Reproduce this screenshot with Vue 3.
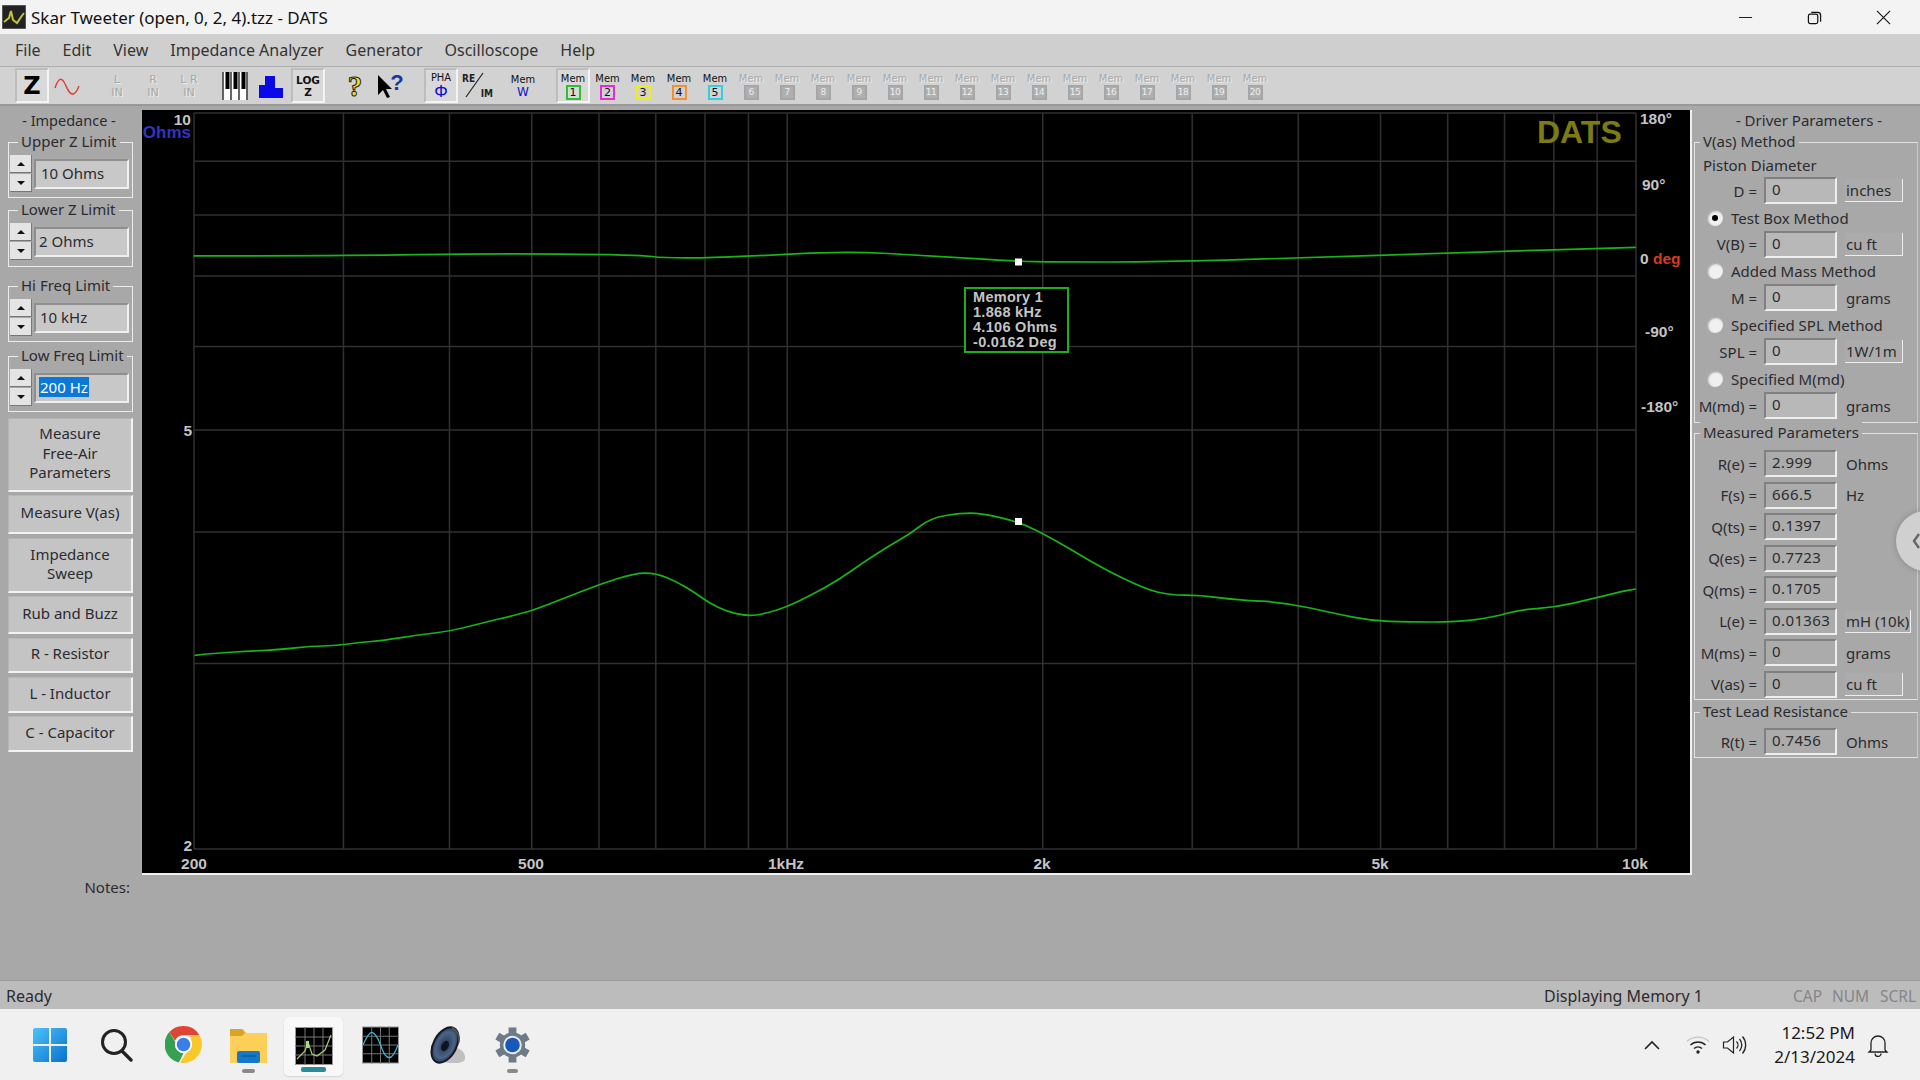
<script setup>
const menus = ['File', 'Edit', 'View', 'Impedance Analyzer', 'Generator', 'Oscilloscope', 'Help']

const memColors = ['#2fc02f', '#e030d0', '#eeee10', '#f09030', '#30d0e0']
const tools = [
  { k: 'z', w: 34, m: 0, on: true },
  { k: 'sine', w: 34, m: 1 },
  { k: 'in', t: 'L', w: 36, m: 15 },
  { k: 'in', t: 'R', w: 36, m: 0 },
  { k: 'in', t: 'L R', w: 36, m: 0 },
  { k: 'piano', w: 36, m: 10 },
  { k: 'hist', w: 36, m: 0 },
  { k: 'log', w: 34, m: 2, on: true },
  { k: 'help', w: 34, m: 13 },
  { k: 'arrow', w: 34, m: 1 },
  { k: 'pha', w: 34, m: 17, on: true },
  { k: 'reim', w: 34, m: 1 },
  { k: 'memw', w: 34, m: 13 },
  { k: 'mem', n: 1, w: 34, m: 16, on: true },
  ...Array.from({ length: 19 }, (_, i) => ({ k: 'mem', n: i + 2, w: i === 0 ? 35 : 36, m: 0 }))
]

const limits = [
  { title: 'Upper Z Limit', val: '10 Ohms', mt: 0, h: 56, pad: 5 },
  { title: 'Lower Z Limit', val: '2 Ohms', mt: 12, h: 57, pad: 3 },
  { title: 'Hi Freq Limit', val: '10 kHz', mt: 19, h: 56, pad: 4 },
  { title: 'Low Freq Limit', val: '200 Hz', mt: 14, h: 56, pad: 3, sel: true }
]
const buttons = [
  { lines: ['Measure', 'Free-Air', 'Parameters'], mt: 6, h: 74 },
  { lines: ['Measure V(as)'], mt: 3, h: 39 },
  { lines: ['Impedance', 'Sweep'], mt: 4, h: 55 },
  { lines: ['Rub and Buzz'], mt: 3, h: 38 },
  { lines: ['R - Resistor'], mt: 4, h: 35 },
  { lines: ['L - Inductor'], mt: 4, h: 36 },
  { lines: ['C - Capacitor'], mt: 3, h: 36 }
]

const vasRows = [
  { type: 'text', label: 'Piston Diameter', h: 23 },
  { type: 'in', label: 'D =', val: '0', unit: 'inches', box: true, h: 29 },
  { type: 'radio', label: 'Test Box Method', on: true, h: 26 },
  { type: 'in', label: 'V(B) =', val: '0', unit: 'cu ft', box: true, h: 26 },
  { type: 'radio', label: 'Added Mass Method', h: 27 },
  { type: 'in', label: 'M =', val: '0', unit: 'grams', h: 27 },
  { type: 'radio', label: 'Specified SPL Method', h: 27 },
  { type: 'in', label: 'SPL =', val: '0', unit: '1W/1m', box: true, h: 27 },
  { type: 'radio', label: 'Specified M(md)', h: 27 },
  { type: 'in', label: 'M(md) =', val: '0', unit: 'grams', h: 27 }
]
const measured = [
  { label: 'R(e) =', val: '2.999', unit: 'Ohms' },
  { label: 'F(s) =', val: '666.5', unit: 'Hz' },
  { label: 'Q(ts) =', val: '0.1397' },
  { label: 'Q(es) =', val: '0.7723' },
  { label: 'Q(ms) =', val: '0.1705' },
  { label: 'L(e) =', val: '0.01363', unit: 'mH (10k)', box: true, wide: true },
  { label: 'M(ms) =', val: '0', unit: 'grams' },
  { label: 'V(as) =', val: '0', unit: 'cu ft', box: true }
]

// chart scales in page pixels
const X0 = 194, XW = 1442, Y0 = 113, YH = 736
const fx = f => X0 + (Math.log10(f / 200) / Math.log10(50)) * XW
const fy = z => Y0 + ((1 - Math.log10(z)) / Math.log10(5)) * YH
const freqs = [200, 300, 400, 500, 600, 700, 800, 900, 1000, 2000, 3000, 4000, 5000, 6000, 7000, 8000, 9000, 10000]
const vLines = freqs.map(fx)
const hLines = [10, 9, 8, 7, 6, 5, 4, 3, 2].map(fy)

// smooth curve through the sampled points: quadratic segments between midpoints
const smooth = pts => {
  let d = `M${pts[0][0].toFixed(1)} ${pts[0][1].toFixed(1)}`
  for (let i = 1; i < pts.length - 1; i++) {
    const mx = (pts[i][0] + pts[i + 1][0]) / 2
    const my = (pts[i][1] + pts[i + 1][1]) / 2
    d += ` Q${pts[i][0].toFixed(1)} ${pts[i][1].toFixed(1)} ${mx.toFixed(1)} ${my.toFixed(1)}`
  }
  const l = pts[pts.length - 1]
  return d + ` L${l[0].toFixed(1)} ${l[1].toFixed(1)}`
}

const S = 1920 / 1568
const zoomPts = [[10,496],[65,488],[130,484],[200,478],[260,469],[320,467],[370,457],[420,452],[500,434],[565,424],[640,398],[700,378],[745,362],[820,322],[890,284],[970,249],[1015,250],[1060,275],[1100,308],[1130,338],[1170,365],[1215,378],[1250,372],[1300,351],[1350,317],[1410,272],[1470,214],[1520,170],[1568,132]]
const dispPts = [[760,423],[785,419],[800,419],[832,426],[860,440],[900,464],[935,481],[955,486],[980,486],[1010,490],[1050,492],[1090,501],[1120,507],[1150,508],[1190,508],[1220,504],[1240,498],[1270,496],[1300,489],[1325,483],[1336,481]]
const impedance = smooth([
  ...zoomPts.map(([x, y]) => [190 + x / 2.178, 490 + y / 3]),
  ...dispPts.map(([x, y]) => [x * S, y * S])
])
const phase = smooth([[158,209],[280,209],[400,207],[520,208],[545,211],[600,210],[690,205],[760,209],[832,213.5],[860,214],[950,214],[1050,211],[1200,206],[1336,202]]
  .map(([x, y]) => [x * S, y * S]))

const xLabels = [['200', 194], ['500', 531], ['1kHz', 786], ['2k', 1042], ['5k', 1380], ['10k', 1635]]
const tipLines = ['Memory 1', '1.868 kHz', '4.106 Ohms', '-0.0162 Deg']
</script>

<template>
  <div class="app">
    <header class="title">
      <svg class="appicon" viewBox="0 0 24 24">
        <rect width="24" height="24" fill="#222" stroke="#888" />
        <path d="M2 17 L7 13 L9 6 L11 15 L15 18 L19 12 L22 8" fill="none" stroke="#c4c43a" stroke-width="2" />
      </svg>
      <span class="title-text">Skar Tweeter (open, 0, 2, 4).tzz - DATS</span>
      <div class="winbtns">
        <svg viewBox="0 0 16 16"><path d="M1 8h14" stroke="#111" fill="none" /></svg>
        <svg viewBox="0 0 16 16"><rect x="1.5" y="4.5" width="10" height="10" rx="2" fill="none" stroke="#111" stroke-width="1.3" /><path d="M4.5 2.5h7a3 3 0 0 1 3 3v7" fill="none" stroke="#111" stroke-width="1.3" /></svg>
        <svg viewBox="0 0 16 16"><path d="M1 1l14 14M15 1L1 15" stroke="#111" stroke-width="1.2" fill="none" /></svg>
      </div>
    </header>

    <nav class="menu">
      <span v-for="m in menus" :key="m" class="menu-item">{{ m }}</span>
    </nav>

    <div class="toolbar">
      <div v-for="(t, i) in tools" :key="i" class="tool" :class="{ on: t.on }" :style="{ width: t.w + 'px', marginLeft: t.m + 'px' }">
        <span v-if="t.k === 'z'" class="t-z">Z</span>
        <svg v-else-if="t.k === 'sine'" width="26" height="20" viewBox="0 0 26 20"><path d="M1 12 C4 3 7 1 10 6 S15 19 19 18 S24 12 25 10" fill="none" stroke="#e03a30" stroke-width="1.4" /></svg>
        <div v-else-if="t.k === 'in'" class="t-in"><span>{{ t.t }}</span><span>IN</span></div>
        <svg v-else-if="t.k === 'piano'" width="26" height="30" viewBox="0 0 26 30">
          <rect x="0.5" y="1" width="25" height="28" fill="#fff" />
          <path d="M1 1v28M9 1v28M17 1v28M25 1v28" stroke="#000" stroke-width="1.2" />
          <path d="M3.5 1h4v17h-4zM11.5 1h4v17h-4zM19.5 1h4v17h-4z" fill="#000" />
        </svg>
        <svg v-else-if="t.k === 'hist'" width="26" height="26" viewBox="0 0 26 26"><path d="M1 25V12h6V3h10v12h8v10z" fill="#0808e8" /></svg>
        <div v-else-if="t.k === 'log'" class="t-log"><span>LOG</span><span>Z</span></div>
        <span v-else-if="t.k === 'help'" class="t-help">?</span>
        <div v-else-if="t.k === 'arrow'" class="t-arrow">
          <svg width="16" height="26" viewBox="0 0 16 26"><path d="M2 2v20l5-5 4 8 3-1-4-8h6z" fill="#000" /></svg>
          <span>?</span>
        </div>
        <div v-else-if="t.k === 'pha'" class="t-stack"><span class="sm">PHA</span><span class="phi">Φ</span></div>
        <div v-else-if="t.k === 'reim'" class="t-reim">
          <span class="re">RE</span>
          <svg class="slash" width="28" height="28" viewBox="0 0 28 28"><path d="M21 1L4 25" stroke="#222" stroke-width="1.2" /></svg>
          <span class="im">IM</span>
        </div>
        <div v-else-if="t.k === 'memw'" class="t-stack"><span class="sm">Mem</span><span class="w">W</span></div>
        <div v-else class="t-mem" :class="{ off: t.n > 5 }">
          <span class="sm">Mem</span>
          <span class="num" :style="t.n <= 5 ? { borderColor: memColors[t.n - 1] } : null">{{ t.n }}</span>
        </div>
      </div>
    </div>

    <main class="body">
      <aside class="left">
        <div class="left-title">- Impedance -</div>
        <section v-for="g in limits" :key="g.title" class="limit" :style="{ marginTop: g.mt + 'px', height: g.h + 'px' }">
          <span class="legend">{{ g.title }}</span>
          <div class="spin">
            <span class="spin-btn"><i class="up"></i></span>
            <span class="spin-btn"><i class="down"></i></span>
          </div>
          <div class="limit-field" :style="{ paddingLeft: g.pad + 'px' }">
            <span :class="{ selected: g.sel }">{{ g.val }}</span>
          </div>
        </section>
        <button v-for="b in buttons" :key="b.lines[0]" class="cmd" :style="{ marginTop: b.mt + 'px', height: b.h + 'px' }">
          <span v-for="l in b.lines" :key="l">{{ l }}</span>
        </button>
        <div class="notes">Notes:</div>
      </aside>

      <div class="center">
        <div class="chart">
          <svg class="plot" viewBox="142 110 1546 761" width="1546" height="761">
            <g stroke="#303030" stroke-width="1.5">
              <line v-for="x in vLines" :key="'v' + x" :x1="x" :x2="x" :y1="Y0" :y2="Y0 + YH" />
              <line v-for="y in hLines" :key="'h' + y" :x1="X0" :x2="X0 + XW" :y1="y" :y2="y" />
            </g>
            <path :d="phase" fill="none" stroke="#18b418" stroke-width="1.7" />
            <path :d="impedance" fill="none" stroke="#18b418" stroke-width="1.7" />
            <rect x="1015" y="258.5" width="7" height="7" fill="#fff" />
            <rect x="1015" y="518" width="7" height="7" fill="#fff" />

            <text class="ax" x="191" y="125" text-anchor="end">10</text>
            <text class="ohms" x="191" y="138" text-anchor="end">Ohms</text>
            <text class="ax" x="192" y="436" text-anchor="end">5</text>
            <text class="ax" x="192" y="851" text-anchor="end">2</text>
            <text v-for="l in xLabels" :key="l[0]" class="ax" :x="l[1]" y="869" text-anchor="middle">{{ l[0] }}</text>
            <text class="ax" x="1640" y="124">180°</text>
            <text class="ax" x="1642" y="190">90°</text>
            <text class="ax" x="1640" y="264">0 <tspan class="deg">deg</tspan></text>
            <text class="ax" x="1645" y="337">-90°</text>
            <text class="ax" x="1641" y="412">-180°</text>
            <text class="dats" x="1537" y="143">DATS</text>

            <rect x="965" y="288" width="103" height="64" fill="#000" stroke="#1cae1c" stroke-width="2" />
            <text v-for="(l, i) in tipLines" :key="l" class="tip" x="973" :y="302 + i * 15">{{ l }}</text>
          </svg>
        </div>
      </div>

      <aside class="right">
        <div class="right-title">- Driver Parameters -</div>
        <section class="rgroup vas">
          <span class="legend">V(as) Method</span>
          <div v-for="r in vasRows" :key="r.label" class="row" :style="{ height: r.h + 'px' }">
            <span v-if="r.type === 'text'" class="plain">{{ r.label }}</span>
            <template v-else-if="r.type === 'radio'">
              <span class="radio" :class="{ on: r.on }"></span>
              <span class="radio-label">{{ r.label }}</span>
            </template>
            <template v-else>
              <span class="lab">{{ r.label }}</span>
              <span class="field vasf">{{ r.val }}</span>
              <span class="unit" :class="{ box: r.box }">{{ r.unit }}</span>
            </template>
          </div>
        </section>
        <section class="rgroup meas">
          <span class="legend">Measured Parameters</span>
          <div v-for="r in measured" :key="r.label" class="row mrow">
            <span class="lab">{{ r.label }}</span>
            <span class="field">{{ r.val }}</span>
            <span v-if="r.unit" class="unit" :class="{ box: r.box, wide: r.wide }">{{ r.unit }}</span>
          </div>
        </section>
        <section class="rgroup lead">
          <span class="legend">Test Lead Resistance</span>
          <div class="row">
            <span class="lab">R(t) =</span>
            <span class="field">0.7456</span>
            <span class="unit">Ohms</span>
          </div>
        </section>
        <div class="swipe"><svg width="8" height="20" viewBox="0 0 8 20"><path d="M7 3L2 10l5 7" fill="none" stroke="#666" stroke-width="2.4" /></svg></div>
      </aside>
    </main>

    <footer class="status">
      <span class="ready">Ready</span>
      <span class="disp">Displaying Memory 1</span>
      <span class="ind cap">CAP</span>
      <span class="ind nm">NUM</span>
      <span class="ind scrl">SCRL</span>
    </footer>

    <div class="taskbar">
      <div class="tb-icons">
        <div class="tb win">
          <svg width="36" height="36" viewBox="0 0 36 36">
            <defs><linearGradient id="wg" x1="0" y1="0" x2="1" y2="1"><stop offset="0" stop-color="#4cc2f8" /><stop offset="1" stop-color="#0a70cf" /></linearGradient></defs>
            <path d="M1 3a2 2 0 0 1 2-2h14v16H1zM19 1h14a2 2 0 0 1 2 2v14H19zM1 19h16v16H3a2 2 0 0 1-2-2zM19 19h16v14a2 2 0 0 1-2 2H19z" fill="url(#wg)" />
          </svg>
        </div>
        <div class="tb search">
          <svg width="34" height="36" viewBox="0 0 34 36"><circle cx="15" cy="15" r="11.5" fill="none" stroke="#222" stroke-width="3" /><path d="M23 24l9 9" stroke="#222" stroke-width="3.4" stroke-linecap="round" /></svg>
        </div>
        <div class="tb chrome">
          <svg width="37" height="37" viewBox="0 0 36 36">
            <path d="M18 0a18 18 0 0 1 15.6 9H18a9 9 0 0 0-8.2 5.3L4.3 5.9A18 18 0 0 1 18 0z" fill="#e04434" />
            <path d="M4.3 5.9l8 13.6a6 6 0 0 0 5.7 7l-4.6 9A18 18 0 0 1 4.3 5.9z" fill="#34a050" />
            <path d="M33.6 9A18 18 0 0 1 15 35.7l8-13.7a9 9 0 0 0 .5-13z" fill="#f8c82a" />
            <circle cx="18" cy="18" r="8.4" fill="#fff" /><circle cx="18" cy="18" r="6.6" fill="#3a7ee8" />
          </svg>
        </div>
        <div class="tb folder">
          <svg width="37" height="37" viewBox="0 0 37 37">
            <path d="M0 3h13l4 4H37v30H0z" fill="#fcd058" /><path d="M0 3h12l3 4-3 3H0z" fill="#d8a428" />
            <rect x="7" y="25" width="23" height="12" rx="2" fill="#1678c8" /><path d="M11 30h15" stroke="#0a4c90" />
          </svg>
        </div>
        <div class="tb active">
          <svg width="38" height="38" viewBox="0 0 38 38">
            <rect x=".5" y=".5" width="37" height="37" fill="#000" stroke="#999" />
            <path d="M10 0v38M19 0v38M28 0v38M0 10h38M0 19h38M0 28h38" stroke="#777" />
            <path d="M2 32L10 24l3-9 4 12 5 2 8-6 6-15" fill="none" stroke="#a8d070" stroke-width="1.2" />
            <rect x="11" y="14" width="3" height="7" fill="#a8e078" />
          </svg>
        </div>
        <div class="tb scope">
          <svg width="38" height="38" viewBox="0 0 38 38">
            <rect x=".5" y=".5" width="37" height="37" fill="#000" stroke="#999" />
            <path d="M10 0v38M19 0v38M28 0v38M0 10h38M0 19h38M0 28h38" stroke="#777" />
            <path d="M1 19C5 10 8 6 10 6s6 4 9 13 6 13 9 13 6-5 9-13" fill="none" stroke="#40b8d0" stroke-width="1.3" />
          </svg>
        </div>
        <div class="tb speaker">
          <svg width="36" height="38" viewBox="0 0 36 38">
            <defs><radialGradient id="sg" cx=".5" cy=".5" r=".6"><stop offset="0" stop-color="#26364e" /><stop offset=".6" stop-color="#4a6488" /><stop offset="1" stop-color="#1c2028" /></radialGradient></defs>
            <path d="M24 22c4-1 10 3 11 8s-3 7-9 7-12 0-13-2c6-3 10-8 11-13z" fill="#c0c0c0" />
            <ellipse cx="15" cy="19" rx="11.5" ry="19" transform="rotate(28 15 19)" fill="url(#sg)" />
            <ellipse cx="15" cy="19" rx="11.5" ry="19" transform="rotate(28 15 19)" fill="none" stroke="#15181e" stroke-width="2" />
            <ellipse cx="15" cy="20" rx="3.5" ry="5.5" transform="rotate(28 15 20)" fill="#10141c" />
            <path d="M22 1.5c5 3 8 8 7 15" fill="none" stroke="#555" stroke-width="1.5" />
          </svg>
        </div>
        <div class="tb gear">
          <svg width="38" height="38" viewBox="0 0 38 38">
            <circle cx="19" cy="19" r="13" fill="#6e7a86" />
            <g stroke="#6e7a86" stroke-width="8"><path d="M19 1v36" /><path d="M3.4 10l31.2 18" /><path d="M3.4 28l31.2-18" /></g>
            <circle cx="19" cy="19" r="9.5" fill="#e8edf2" /><circle cx="19" cy="19" r="7.5" fill="#1858b8" />
          </svg>
        </div>
        <span class="pill p1"></span>
        <span class="pill p2"></span>
        <span class="pill p3"></span>
      </div>
      <div class="tray">
        <svg class="chev" width="18" height="10" viewBox="0 0 18 10"><path d="M2 9l7-7 7 7" fill="none" stroke="#222" stroke-width="1.6" /></svg>
        <svg class="wifi" width="24" height="20" viewBox="0 0 24 20">
          <path d="M1 6.5a16 16 0 0 1 22 0" fill="none" stroke="#c4c4c4" stroke-width="1.3" />
          <path d="M4.5 10a11 11 0 0 1 15 0M8 13.5a6 6 0 0 1 8 0" fill="none" stroke="#222" stroke-width="1.4" />
          <circle cx="12" cy="17" r="1.7" fill="#222" />
        </svg>
        <svg class="vol" width="26" height="20" viewBox="0 0 26 20">
          <path d="M1.5 7h4l6-5v16l-6-5h-4z" fill="none" stroke="#222" stroke-width="1.2" />
          <path d="M14.5 6.5a5 5 0 0 1 0 7M17.5 4a9 9 0 0 1 0 12M20.5 1.5a13 13 0 0 1 0 17" fill="none" stroke="#222" stroke-width="1.3" />
        </svg>
        <div class="clock"><span>12:52 PM</span><span>2/13/2024</span></div>
        <svg class="bell" width="22" height="24" viewBox="0 0 22 24"><path d="M4 17V10a7 7 0 0 1 14 0v7l2 2H2zM8 20.5a3 3 0 0 0 6 0" fill="none" stroke="#222" stroke-width="1.3" /></svg>
      </div>
    </div>
  </div>
</template>

<style scoped>
.app { width: 1920px; height: 1080px; display: flex; flex-direction: column; overflow: hidden; font-family: "Noto Sans", "Liberation Sans", sans-serif; color: #2b2b30; background: #a8a8a8; }

.title { height: 34px; flex: none; background: #f3f3f3; display: flex; align-items: center; position: relative; }
.appicon { width: 24px; height: 24px; margin-left: 2px; }
.title-text { margin-left: 5px; font-size: 17px; color: #111; white-space: nowrap; }
.winbtns { margin-left: auto; display: flex; gap: 54px; padding-right: 29px; align-items: center; }
.winbtns svg { width: 15px; height: 15px; }

.menu { height: 33px; flex: none; background: #cfcfcf; display: flex; align-items: center; padding-left: 4px; border-bottom: 1px solid #aeaeae; box-sizing: border-box; }
.menu-item { padding: 0 11px; font-size: 16px; color: #333; white-space: nowrap; }

.toolbar { height: 39px; flex: none; background: #d2d2d2; display: flex; align-items: center; padding-left: 15px; border-bottom: 2px solid #999; box-sizing: border-box; }
.tool { height: 35px; flex: none; box-sizing: border-box; display: flex; align-items: center; justify-content: center; border: 2px solid transparent; }
.tool.on { background: #d9d9d9; border-color: #bdbdbd #f4f4f4 #f4f4f4 #bdbdbd; }
.t-z { font: 900 24px "DejaVu Sans", sans-serif; color: #000; }
.t-in { display: flex; flex-direction: column; align-items: center; font: 11px/13px "DejaVu Sans", sans-serif; color: #a6a6a6; text-shadow: 1px 1px #efefef; }
.t-log { display: flex; flex-direction: column; align-items: center; font: bold 10.5px/12px "DejaVu Sans", sans-serif; color: #111; }
.t-help { font: bold 29px/30px "Liberation Serif", serif; color: #f4d820; -webkit-text-stroke: 1px #222; }
.t-arrow { display: flex; align-items: flex-start; }
.t-arrow span { font: bold 22px/20px "Liberation Sans", sans-serif; color: #1838a0; margin-left: -2px; }
.t-stack { display: flex; flex-direction: column; align-items: center; line-height: 13px; }
.sm { font: 11px/13px "DejaVu Sans Condensed", "DejaVu Sans", sans-serif; color: #111; white-space: nowrap; }
.phi { font: 17px/16px "Liberation Sans", sans-serif; color: #1010d0; }
.w { font: 12px/13px "DejaVu Sans", sans-serif; color: #1010d0; }
.t-reim { width: 28px; height: 28px; position: relative; font: bold 10px/11px "DejaVu Sans Condensed", "DejaVu Sans", sans-serif; color: #222; }
.t-reim .re { position: absolute; left: 0; top: 1px; }
.t-reim .im { position: absolute; right: -3px; bottom: 1px; }
.t-reim .slash { position: absolute; left: 0; top: 0; }
.t-mem { display: flex; flex-direction: column; align-items: center; }
.num { width: 15px; height: 15px; box-sizing: border-box; border: 2px solid #aaa; font: 11px/11px "DejaVu Sans", sans-serif; text-align: center; color: #111; white-space: nowrap; }
.t-mem.off .sm { color: #a8a8a8; text-shadow: 1px 1px #efefef; }
.t-mem.off .num { background: #b0b0b0; color: #eee; border-color: #a6a6a6; font-size: 9px; letter-spacing: -.5px; }

.body { flex: 1; min-height: 0; display: flex; background: #a8a8a8; }

.left { width: 142px; flex: none; box-sizing: border-box; padding-left: 8px; display: flex; flex-direction: column; align-items: flex-start; font-size: 15px; }
.left-title { width: 125px; height: 36px; padding: 4px 3px 0 0; box-sizing: border-box; text-align: center; line-height: 20px; font-size: 14.5px; }
.limit { width: 125px; box-sizing: border-box; position: relative; display: flex; border: 1px solid #ececec; padding: 12px 0 0 1px; flex: none; }
.legend { position: absolute; top: -12px; left: 9px; background: #a8a8a8; padding: 0 3px; font-size: 15px; line-height: 20px; white-space: nowrap; }
.spin { width: 22px; display: flex; flex-direction: column; gap: 1px; flex: none; }
.spin-btn { height: 18px; background: #e4e4e4; border-right: 1px solid #777; border-bottom: 1px solid #777; display: flex; align-items: center; justify-content: center; box-sizing: border-box; }
.spin-btn i { width: 0; height: 0; border-left: 4px solid transparent; border-right: 4px solid transparent; }
.spin-btn .up { border-bottom: 4px solid #111; }
.spin-btn .down { border-top: 4px solid #111; }
.limit-field { width: 95px; height: 30px; margin: 4px 0 0 2px; box-sizing: border-box; background: #c8c8c8; border: 2px solid; border-color: #8e8e8e #efefef #efefef #8e8e8e; display: flex; align-items: center; font-size: 15px; padding-bottom: 2px; }
.selected { background: #0a78d7; color: #fff; padding: 0 1px; }
.cmd { width: 125px; flex: none; padding: 0 0 2px; box-sizing: border-box; background: #c4c4c4; border: 1px solid #b6b6b6; border-right: 2px solid #f2f2f2; border-bottom: 2px solid #f2f2f2; display: flex; flex-direction: column; align-items: center; justify-content: center; font: 15px/19.5px "Noto Sans", sans-serif; color: #2b2b30; }
.notes { width: 122px; margin-top: 125px; text-align: right; font-size: 15px; line-height: 20px; }

.center { width: 1550px; flex: none; padding-top: 4px; box-sizing: border-box; }
.chart { width: 1550px; height: 765px; box-sizing: border-box; background: #000; border-bottom: 2px solid #f0f0f0; border-right: 2px solid #f0f0f0; }
.plot { display: block; }
.ax { font: bold 15.5px "Liberation Sans", sans-serif; fill: #c4c4c4; }
.ohms { font: bold 17px "Liberation Sans", sans-serif; fill: #3434c0; }
.deg { fill: #d83a22; }
.dats { font: bold 32px "Liberation Sans", sans-serif; fill: #7c7c10; }
.tip { font: bold 14.5px "Liberation Sans", sans-serif; fill: #c4c4c4; letter-spacing: .3px; }

.right { width: 228px; flex: none; position: relative; box-sizing: border-box; padding-left: 2px; font-size: 15px; }
.right-title { height: 36px; padding: 4px 0 0 4px; box-sizing: border-box; text-align: center; line-height: 20px; }
.rgroup { position: relative; box-sizing: border-box; width: 224px; border: 1px solid #e2e2e2; border-right-color: #c8c8c8; }
.rgroup .legend { left: 5px; }
.vas { height: 281px; padding-top: 10px; }
.meas { margin-top: 10px; height: 267px; padding-top: 16px; }
.lead { margin-top: 12px; height: 46px; padding-top: 15px; }
.row { display: flex; align-items: center; height: 27px; white-space: nowrap; }
.mrow { height: 27px; margin-bottom: 4.5px; }
.plain { padding-left: 8px; }
.lab { width: 62px; flex: none; text-align: right; }
.field { width: 73px; height: 27px; flex: none; box-sizing: border-box; margin-left: 7px; padding-left: 6px; background: #ababab; border: 2px solid; border-color: #808080 #eeeeee #eeeeee #808080; line-height: 20px; letter-spacing: .4px; }
.vasf { background: #b8b8b8; }
.unit { margin-left: 8px; padding-left: 1px; }
.unit.box { width: 58px; height: 23px; box-sizing: border-box; border-right: 1px solid #eee; border-bottom: 1px solid #eee; line-height: 22px; background: #ababab; }
.unit.wide { width: 66px; }
.radio { width: 16px; height: 16px; flex: none; margin-left: 12px; border-radius: 50%; background: #f0f0f0; box-shadow: inset 1px 1px 2px #999; position: relative; }
.radio.on::after { content: ""; position: absolute; left: 5px; top: 5px; width: 6px; height: 6px; border-radius: 50%; background: #000; }
.radio-label { margin-left: 8px; }
.swipe { position: absolute; left: 204px; top: 405px; width: 60px; height: 60px; border-radius: 50%; background: #d0d0d0; box-sizing: border-box; padding: 20px 0 0 16px; box-shadow: 0 0 6px rgba(0,0,0,.2); }

.status { height: 29px; flex: none; background: #bcbcbc; border-top: 1px solid #999; box-sizing: border-box; display: flex; align-items: center; font-size: 16px; position: relative; padding-top: 1px; }
.ready { margin-left: 6px; }
.disp { position: absolute; left: 1544px; }
.ind { position: absolute; color: #85858a; font-size: 15.5px; }
.cap { left: 1793px; }
.nm { left: 1832px; }
.scrl { left: 1880px; }

.taskbar { height: 71px; flex: none; background: #f0f0f0; position: relative; display: flex; align-items: center; }
.tb-icons { display: flex; align-items: center; height: 100%; padding-left: 31px; position: relative; }
.tb { width: 37px; display: flex; justify-content: center; margin-top: 0; }
.search { margin-left: 31px; width: 34px; }
.chrome { margin-left: 32px; }
.folder { margin-left: 28px; }
.active { margin-left: 17px; width: 59px; height: 59px; align-items: center; background: #f8f8f8; border-radius: 5px; box-shadow: 0 1px 2px rgba(0,0,0,.12); margin-top: 3px; }
.scope { margin-left: 19px; }
.speaker { margin-left: 30px; }
.gear { margin-left: 28px; }
.pill { position: absolute; height: 4px; border-radius: 2px; background: #8a8a8a; top: 60px; }
.p1 { left: 242px; width: 13px; }
.p2 { left: 301px; width: 25px; background: #2a8a9a; top: 58px; height: 5px; }
.p3 { left: 507px; width: 11px; }
.tray { margin-left: auto; display: flex; align-items: center; position: relative; }
.chev { margin-right: 25px; }
.wifi { margin-right: 12px; }
.vol { margin-right: 10px; }
.clock { display: flex; flex-direction: column; align-items: flex-end; font-size: 17px; line-height: 24px; color: #1a1a1a; width: 97px; }
.bell { margin-left: 12px; margin-right: 31px; }
</style>

<style>
html, body { margin: 0; padding: 0; background: #a8a8a8; }
</style>
